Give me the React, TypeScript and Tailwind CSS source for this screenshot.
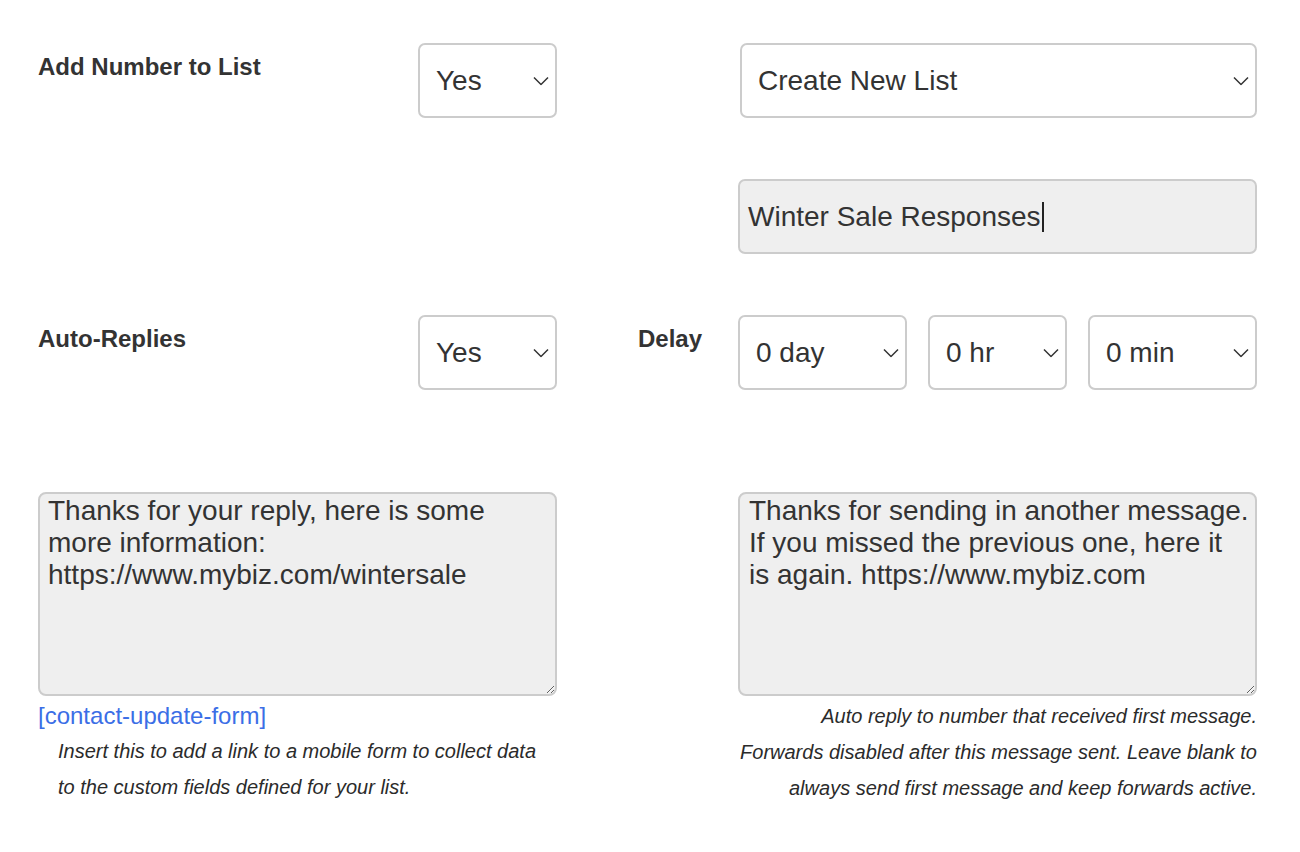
import { useState } from "react";

function Chevron() {
  return (
    <svg
      width="16"
      height="9"
      viewBox="0 0 16 9"
      className="pointer-events-none absolute right-[6px] top-1/2 -translate-y-1/2"
    >
      <polyline points="1,1 8,8 15,1" fill="none" stroke="#333333" strokeWidth="1.5" />
    </svg>
  );
}

function Select({ value, options, className }: { value: string; options: string[]; className: string }) {
  const [v, setV] = useState(value);
  return (
    <div className={"relative h-[75px] rounded-[7px] border-2 border-[#cccccc] bg-white " + className}>
      <select
        value={v}
        onChange={e => setV(e.target.value)}
        className="h-full w-full appearance-none bg-transparent pl-[16px] pr-[34px] text-[28px] text-[#333333] outline-none"
      >
        {options.map(o => (
          <option key={o}>{o}</option>
        ))}
      </select>
      <Chevron />
    </div>
  );
}

export default function App() {
  return (
    <div className="min-h-screen bg-white pl-[38px] pt-[43px] text-[#333333] font-['Liberation_Sans',Arial,sans-serif]">
      <div className="w-[1219px]">

        {/* Add number to list */}
        <div className="flex">
          <div className="w-[380px] pt-[9px] text-[24px] font-bold leading-[29px]">Add Number to List</div>
          <Select value="Yes" options={["Yes", "No"]} className="w-[139px]" />
          <Select value="Create New List" options={["Create New List", "Customers", "Leads"]} className="ml-[183px] w-[517px]" />
        </div>

        {/* New list name */}
        <div className="mt-[61px] flex">
          <div className="ml-[700px] flex h-[75px] w-[519px] items-center rounded-[7px] border-2 border-[#cccccc] bg-[#efefef] pl-[8px] text-[28px]">
            <span>Winter Sale Responses</span>
            <span className="ml-px inline-block h-[30px] w-[2px] bg-[#222222]" />
          </div>
        </div>

        {/* Auto replies */}
        <div className="mt-[61px] flex">
          <div className="w-[380px] pt-[9px] text-[24px] font-bold leading-[29px]">Auto-Replies</div>
          <Select value="Yes" options={["Yes", "No"]} className="w-[139px]" />
          <div className="ml-[81px] w-[100px] pt-[9px] text-[24px] font-bold leading-[29px]">Delay</div>
          <Select value="0 day" options={["0 day", "1 day", "2 day"]} className="w-[169px]" />
          <Select value="0 hr" options={["0 hr", "1 hr", "2 hr"]} className="ml-[21px] w-[139px]" />
          <Select value="0 min" options={["0 min", "15 min", "30 min"]} className="ml-[21px] w-[169px]" />
        </div>

        {/* Messages */}
        <div className="mt-[102px] flex">
          <div className="w-[519px]">
            <textarea
              defaultValue={"Thanks for your reply, here is some\nmore information:\nhttps://www.mybiz.com/wintersale"}
              className="block h-[204px] w-full rounded-[8px] border-2 border-[#cccccc] bg-[#efefef] pl-[8px] pr-[4px] pt-px text-[28px] leading-[32px] text-[#333333] outline-none"
            />
            <a href="#" className="mt-[5px] block text-[24px] leading-[29px] text-[#3b6ee6]">
              [contact-update-form]
            </a>
            <p className="mt-[3px] pl-[20px] text-[20px] italic leading-[36px] text-[#2b2b2b]">
              Insert this to add a link to a mobile form to collect data
              <br />
              to the custom fields defined for your list.
            </p>
          </div>
          <div className="ml-[181px] w-[519px]">
            <textarea
              defaultValue={"Thanks for sending in another message.\nIf you missed the previous one, here it\nis again. https://www.mybiz.com"}
              className="block h-[204px] w-full rounded-[8px] border-2 border-[#cccccc] bg-[#efefef] pl-[9px] pr-[2px] pt-px text-[28px] leading-[32px] text-[#333333] outline-none"
            />
            <p className="mt-[2px] text-right text-[20px] italic leading-[36px] text-[#2b2b2b]">
              Auto reply to number that received first message.
              <br />
              <span className="whitespace-nowrap">Forwards disabled after this message sent. Leave blank to</span>
              <br />
              always send first message and keep forwards active.
            </p>
          </div>
        </div>

      </div>
    </div>
  );
}
